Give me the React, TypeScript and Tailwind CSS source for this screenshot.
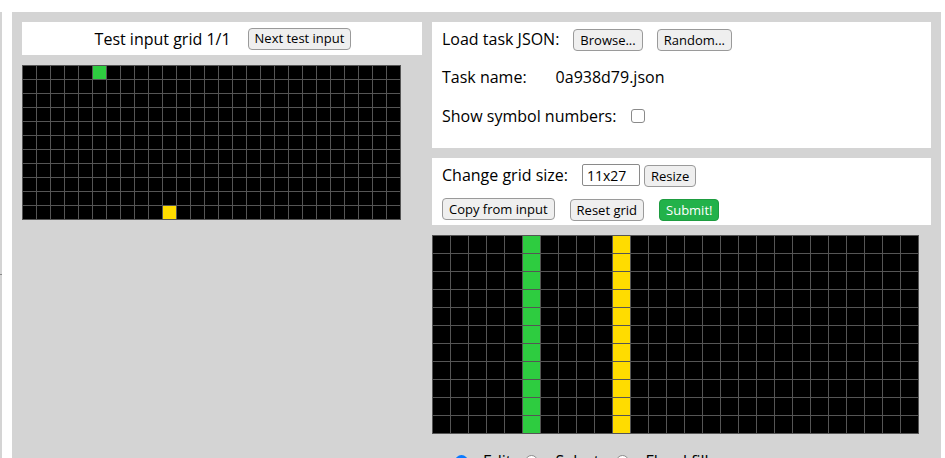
import React from "react";

const COLORS: Record<number, string> = {
  0: "bg-black",
  3: "bg-[#2ecc40]",
  4: "bg-[#ffdc00]",
};

const ROWS = 11;
const COLS = 27;

const inputGrid: number[][] = Array.from({ length: ROWS }, (_, r) =>
  Array.from({ length: COLS }, (_, c) => {
    if (r === 0 && c === 5) return 3;
    if (r === 10 && c === 10) return 4;
    return 0;
  })
);

const outputGrid: number[][] = Array.from({ length: ROWS }, () =>
  Array.from({ length: COLS }, (_, c) => (c === 5 ? 3 : c === 10 ? 4 : 0))
);

const Grid = ({ grid, big }: { grid: number[][]; big?: boolean }) => (
  <div className="flex flex-col w-fit shrink-0 border-l border-t border-[#555]">
    {grid.map((row, r) => (
      <div key={r} className="flex">
        {row.map((v, c) => (
          <div
            key={c}
            className={`${big ? "w-[18px] h-[18px]" : "w-[14px] h-[14px]"} border-r border-b border-[#555] ${COLORS[v]}`}
          />
        ))}
      </div>
    ))}
  </div>
);

const Btn = ({ children, green }: { children: React.ReactNode; green?: boolean }) => (
  <button
    type="button"
    className={`h-[22px] px-[6px] rounded-[4px] border text-[13px] leading-none ${
      green ? "bg-[#22b24a] border-[#1e9c40] text-white" : "bg-[#efefef] border-[#9a9a9a] text-black"
    }`}
  >
    {children}
  </button>
);

export default function App() {
  return (
    <div className="h-[458px] overflow-hidden bg-white flex items-start pt-3 text-black font-['Open_Sans','Noto_Sans',sans-serif]">
      <div className="w-[2px] h-[446px] bg-[#d4d4d4] flex flex-col">
        <div className="h-[262px]" />
        <div className="h-px bg-[#888]" />
      </div>

      <div className="ml-[10px] w-[929px] min-h-[446px] bg-[#d4d4d4] flex items-start gap-[10px] p-[10px]">
        {/* left column */}
        <div className="w-[400px] flex flex-col gap-[10px]">
          <div className="h-[33px] shrink-0 bg-white flex items-center justify-center gap-[17px] text-[16px] pl-[2px]">
            <span>Test input grid 1/1</span>
            <Btn>Next test input</Btn>
          </div>
          <Grid grid={inputGrid} />
        </div>

        {/* right column */}
        <div className="w-[499px] flex flex-col">
          <div className="h-[126px] shrink-0 bg-white px-[10px] pt-[6px] text-[16px] flex flex-col">
            <div className="h-[22px] flex items-center">
              <span>Load task JSON:</span>
              <span className="ml-[14px]"><Btn>Browse...</Btn></span>
              <span className="ml-[14px]"><Btn>Random...</Btn></span>
            </div>
            <div className="h-[22px] mt-[16px] flex items-center">
              <span>Task name:</span>
              <span className="ml-[29px]">0a938d79.json</span>
            </div>
            <div className="h-[22px] mt-[17px] flex items-center">
              <span>Show symbol numbers:</span>
              <span className="ml-[15px] w-[14px] h-[14px] border border-[#8a8a8a] rounded-[3px] bg-white" />
            </div>
          </div>

          <div className="h-[67px] shrink-0 mt-[10px] bg-white px-[10px] pt-[6px] text-[16px] flex flex-col">
            <div className="h-[22px] flex items-center">
              <span>Change grid size:</span>
              <span className="ml-[14px] w-[58px] h-[22px] border border-[#8a8a8a] rounded-[2px] flex items-center px-[4px] text-[14px]">
                11x27
              </span>
              <span className="ml-[4px]"><Btn>Resize</Btn></span>
            </div>
            <div className="h-[22px] mt-[12px] flex items-center">
              <Btn>Copy from input</Btn>
              <span className="ml-[15px]"><Btn>Reset grid</Btn></span>
              <span className="ml-[15px]"><Btn green>Submit!</Btn></span>
            </div>
          </div>

          <div className="mt-[10px] shrink-0">
            <Grid grid={outputGrid} big />
          </div>

          <div className="mt-[15px] h-[24px] shrink-0 flex items-center text-[16px] leading-[24px] pl-[23px]">
            <span className="w-[13px] h-[13px] rounded-full border-[4px] border-[#0a7aff] bg-white" />
            <span className="ml-[15px]">Edit</span>
            <span className="ml-[14px] w-[13px] h-[13px] rounded-full border border-[#8a8a8a] bg-white" />
            <span className="ml-[17px]">Select</span>
            <span className="ml-[16px] w-[13px] h-[13px] rounded-full border border-[#8a8a8a] bg-white" />
            <span className="ml-[17px]">Flood fill</span>
          </div>
        </div>
      </div>
    </div>
  );
}
